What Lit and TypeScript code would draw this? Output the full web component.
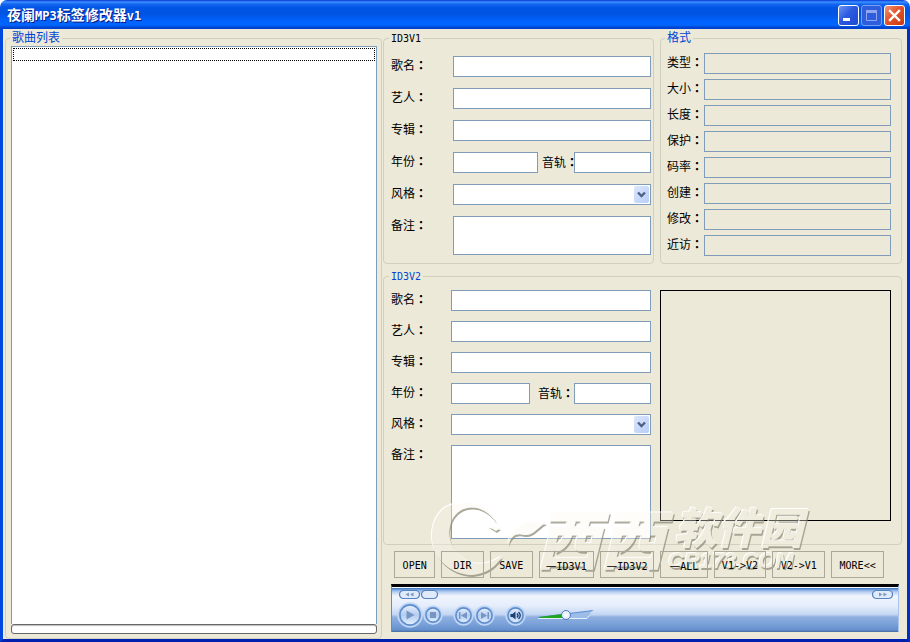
import { LitElement, html, svg, css } from "lit";
import { customElement, property } from "lit/decorators.js";

const colon = html`<span class="colon">：</span>`;

const baseText = css`
  :host {
    font-family: "DejaVu Sans Mono", "Noto Sans CJK SC", monospace;
    font-size: 12px;
    color: #000;
  }
  * {
    box-sizing: border-box;
  }
  .colon {
    font-family: "Noto Sans CJK JP", sans-serif;
    font-weight: 700;
  }
  .latin {
    font-size: 10px;
  }
`;

@customElement("title-bar")
class TitleBar extends LitElement {
  static styles = [
    baseText,
    css`
      :host {
        display: block;
      }
      .bar {
        display: flex;
        align-items: center;
        height: 29px;
        padding: 2px 5px 0 7px;
        border-radius: 7px 7px 0 0;
        background: linear-gradient(
          #0831d9 0,
          #3a93ff 2px,
          #1667f0 4px,
          #0055e5 8px,
          #0054e3 14px,
          #0061fa 20px,
          #0066ff 25px,
          #0049d6 27px,
          #003dcc 29px
        );
      }
      h1 {
        flex: 1;
        margin: 0;
        color: #fff;
        font-size: 14px;
        line-height: 24px;
        font-weight: 700;
        text-shadow: 1px 1px 0 #0a1883;
      }
      .narrow {
        font-size: 12px;
      }
      .controls {
        display: flex;
        gap: 2px;
      }
      button {
        width: 21px;
        height: 21px;
        padding: 0;
        border: 1px solid #fff;
        border-radius: 3px;
        background: linear-gradient(135deg, #6f93f5, #2a5ae0 45%, #1d4ad2);
      }
      button:disabled {
        border-color: #7d9cf3;
        background: #2f5edd;
      }
      .close {
        background: linear-gradient(135deg, #f0967c, #e2542c 45%, #c93a12);
      }
      svg {
        display: block;
      }
    `,
  ];

  render() {
    return html`
      <header class="bar">
        <h1>夜阑<span class="narrow">MP3</span>标签修改器<span class="narrow">v1</span></h1>
        <div class="controls">
          <button aria-label="最小化">
            <svg width="19" height="19"><rect x="4" y="12" width="7" height="3" fill="#fff" /></svg>
          </button>
          <button aria-label="最大化" disabled>
            <svg width="19" height="19">
              <path d="M4.500 5.500h10v9h-10z" fill="none" stroke="#8fa6f2" />
              <path d="M4 5.500h11" stroke="#8fa6f2" stroke-width="3" />
            </svg>
          </button>
          <button class="close" aria-label="关闭">
            <svg width="19" height="19">
              <path d="M5 5l9 9M14 5l-9 9" stroke="#fff" stroke-width="2.400" stroke-linecap="square" />
            </svg>
          </button>
        </div>
      </header>
    `;
  }
}

const fields = css`
  label {
    line-height: 18px;
    white-space: nowrap;
  }
  input,
  select,
  textarea {
    display: block;
    width: 100%;
    min-width: 0;
    height: 21px;
    margin: 0;
    padding: 1px 3px;
    border: 1px solid #7f9db9;
    border-radius: 0;
    background: #fff;
    font: inherit;
    outline: none;
    resize: none;
  }
`;

@customElement("tag-form")
class TagForm extends LitElement {
  @property() variant = "v1";

  static styles = [
    baseText,
    fields,
    css`
      :host {
        display: block;
      }
      .grid {
        display: grid;
        grid-template-columns: 62px 85fr 36px 77fr;
        grid-template-rows: repeat(5, 21px) 39px;
        row-gap: 11px;
      }
      .v2 {
        grid-template-columns: 60px 79fr 44px 77fr;
        grid-template-rows: repeat(5, 21px) 94px;
        row-gap: 10px;
      }
      .wide {
        grid-column: 2 / -1;
      }
      .track {
        padding-left: 4px;
        line-height: 20px;
      }
      .v2 .track {
        padding-left: 8px;
      }
      textarea {
        height: 100%;
      }
      .combo {
        position: relative;
      }
      .combo select {
        appearance: none;
      }
      .arrow {
        position: absolute;
        top: 2px;
        right: 2px;
        width: 15px;
        height: 17px;
        border-radius: 2px;
        background: linear-gradient(135deg, #dbe7fd, #b9cdf6);
        pointer-events: none;
      }
    `,
  ];

  render() {
    return html`
      <div class="grid ${this.variant}">
        <label for="song">歌名${colon}</label><input id="song" class="wide" />
        <label for="artist">艺人${colon}</label><input id="artist" class="wide" />
        <label for="album">专辑${colon}</label><input id="album" class="wide" />
        <label for="year">年份${colon}</label><input id="year" />
        <label for="track" class="track">音轨${colon}</label><input id="track" />
        <label for="genre">风格${colon}</label>
        <div class="wide combo">
          <select id="genre"></select>
          <svg class="arrow" viewBox="0 0 15 17">
            <path d="M4 6.500l3.500 3.500L11 6.500" fill="none" stroke="#4d6185" stroke-width="2.400" />
          </svg>
        </div>
        <label for="note">备注${colon}</label><textarea id="note" class="wide"></textarea>
      </div>
    `;
  }
}

@customElement("format-info")
class FormatInfo extends LitElement {
  static styles = [
    baseText,
    fields,
    css`
      :host {
        display: block;
      }
      .grid {
        display: grid;
        grid-template-columns: 37px 1fr;
        grid-auto-rows: 21px;
        row-gap: 5px;
      }
      input {
        background: transparent;
      }
    `,
  ];

  render() {
    const names = ["类型", "大小", "长度", "保护", "码率", "创建", "修改", "近访"];
    return html`
      <div class="grid">
        ${names.map(
          (name, i) => html`<label for="info${i}">${name}${colon}</label><input id="info${i}" readonly />`
        )}
      </div>
    `;
  }
}

const disc = (size: number, glyph: unknown) => {
  const c = size / 2;
  return html`<svg width=${size} height=${size}>
    <circle cx=${c} cy=${c} r=${c - 1} fill="#8fb3e6" stroke="#c3d8f5" stroke-width="1.500" />
    <circle cx=${c} cy=${c} r=${c - 3} fill="url(#gloss)" stroke="#5d8bca" stroke-width="1.300" />
    ${glyph}
  </svg>`;
};

@customElement("media-player")
class MediaPlayer extends LitElement {
  static styles = [
    baseText,
    css`
      :host {
        display: block;
      }
      .player {
        height: 48px;
        border-top: 3px solid #000;
        background: linear-gradient(
          #f4f8ff 0,
          #f4f8ff 1px,
          #3c72b8 1px,
          #7fa9e4 3px,
          #b9d0f3 5px,
          #f1f5fd 9px,
          #e4edfb 19px,
          #c6d8f4 27px,
          #bcd0f1 28px,
          #8fb0e0 30px,
          #7aa1d9 37px,
          #6590cd 43px,
          #44699f 45px
        );
        border-left: 1px solid #5d8bcb;
        border-right: 1px solid #a9c3ea;
        padding: 2px 5px 0 5px;
      }
      .seek {
        display: flex;
        gap: 1px;
        padding-left: 2px;
        height: 11px;
      }
      .seek svg {
        display: block;
      }
      .forward {
        margin-left: auto;
      }
      .row {
        display: flex;
        align-items: center;
        height: 30px;
      }
      button {
        padding: 0;
        border: 0;
        background: none;
        flex: none;
      }
      .row svg {
        display: block;
      }
      .pair {
        display: flex;
        align-items: center;
        margin-right: 10px;
      }
      .volume {
        position: relative;
        margin-left: 12px;
        width: 56px;
        height: 14px;
      }
      .volume input {
        position: absolute;
        inset: 0;
        width: 56px;
        height: 14px;
        margin: 0;
        appearance: none;
        background: none;
      }
      .volume input::-webkit-slider-thumb {
        appearance: none;
        width: 10px;
        height: 10px;
        border: 1px solid #4f7fb8;
        border-radius: 5px;
        background: radial-gradient(#fff, #cfe2fa);
      }
      .defs {
        position: absolute;
        width: 0;
        height: 0;
      }
    `,
  ];

  render() {
    const pill = (w: number, arrows: unknown) => html`<svg width=${w} height="10">
      <rect x="0.500" y="0.500" width=${w - 1} height="8" rx="4" fill="#dfeafa" stroke="#5583c4" stroke-width="1.200" />
      ${arrows}
    </svg>`;
    return html`
      <svg class="defs">
        <linearGradient id="gloss" x2="0" y2="1">
          <stop offset="0" stop-color="#e8f1fd" />
          <stop offset="0.500" stop-color="#b4cdf0" />
          <stop offset="1" stop-color="#e3f0ff" />
        </linearGradient>
      </svg>
      <div class="player">
        <div class="seek">
          <button aria-label="快退">${pill(21, svg`<path d="M10 2.500v4L6.500 4.500zM14.500 2.500v4L11 4.500z" fill="#7f97bd" />`)}</button>
          <button aria-label="进度">${pill(17, "")}</button>
          <button class="forward" aria-label="快进">
            ${pill(21, svg`<path d="M7 2.500v4L10.500 4.500zM11.500 2.500v4L15 4.500z" fill="#7f97bd" />`)}
          </button>
        </div>
        <div class="row">
          <div class="pair">
            <button aria-label="播放">
              ${disc(26, svg`<path d="M9.500 8.500v9l8-4.500z" fill="#7896c4" />`)}
            </button>
            <button aria-label="停止">
              ${disc(20, svg`<rect x="7" y="7" width="6" height="6" fill="#7896c4" />`)}
            </button>
          </div>
          <div class="pair">
            <button aria-label="上一首">
              ${disc(21, svg`<path d="M6 7h1.500v7H6zM14 7v7l-6-3.500z" fill="#7896c4" />`)}
            </button>
            <button aria-label="下一首">
              ${disc(21, svg`<path d="M13.500 7H15v7h-1.500zM7 7v7l6-3.500z" fill="#7896c4" />`)}
            </button>
          </div>
          <button aria-label="静音">
            ${disc(
              21,
              svg`<path d="M5.500 9h2L10.500 6.500v8L7.500 12h-2z" fill="#1d3f74" />
                <path d="M12 8.500q2 2 0 4M13.500 7q3.500 3.500 0 7" fill="none" stroke="#1d3f74" stroke-width="1.300" />`
            )}
          </button>
          <div class="volume">
            <svg width="56" height="14">
              <path d="M0 9.500L55 2.500L49 10.500H0z" fill="#9dbce8" stroke="#5f8fd0" />
              <path d="M0 10.500H49L55 2.500" fill="none" stroke="#e6f0fd" />
              <path d="M1 9L25 6V10H1z" fill="#1fa51f" />
            </svg>
            <input type="range" min="0" max="100" value="50" aria-label="音量" />
          </div>
        </div>
      </div>
    `;
  }
}

@customElement("site-watermark")
class SiteWatermark extends LitElement {
  static styles = css`
    :host {
      display: block;
    }
    svg {
      display: block;
      overflow: visible;
    }
    .han {
      font: italic 900 43px "Noto Sans CJK SC", sans-serif;
    }
    .big {
      font-size: 64px;
    }
    .url {
      font: italic 700 22px "Liberation Sans", sans-serif;
    }
  `;

  render() {
    return html`
      <svg width="400" height="84">
        <filter id="emboss" x="-5%" y="-5%" width="110%" height="110%" color-interpolation-filters="sRGB">
          <feOffset in="SourceAlpha" dx="1" dy="2" result="low" />
          <feGaussianBlur in="low" stdDeviation="0.600" result="lowSoft" />
          <feFlood flood-color="#8f8b7a" flood-opacity="0.750" />
          <feComposite in2="lowSoft" operator="in" />
          <feComposite in2="SourceAlpha" operator="out" result="dark" />
          <feOffset in="SourceAlpha" dx="-1" dy="-1" result="high" />
          <feFlood flood-color="#ffffff" flood-opacity="0.950" />
          <feComposite in2="high" operator="in" />
          <feComposite in2="SourceAlpha" operator="out" result="light" />
          <feFlood flood-color="#f8f6ea" flood-opacity="0.350" />
          <feComposite in2="SourceAlpha" operator="in" result="body" />
          <feMerge>
            <feMergeNode in="dark" />
            <feMergeNode in="light" />
            <feMergeNode in="body" />
          </feMerge>
        </filter>
        <g filter="url(#emboss)">
          <path
            d="M66 24C60 9 46 2 32 6C12 4 1 22 2 41C4 60 19 76 42 77C56 76 67 68 72 58C58 68 42 68 32 59C20 50 16 36 22 22C30 6 52 4 66 24z"
          />
          <path d="M58 28L70 30L66 33zM78 47C80 30 95 20 116 25C106 30 104 38 94 37C86 35 82 37 78 47z" />
          <text class="han big" x="106" y="66">西西</text>
          <text class="han" x="244" y="46">软件园</text>
          <text class="url" x="238" y="70">CR173.COM</text>
        </g>
      </svg>
    `;
  }
}

@customElement("app-root")
class AppRoot extends LitElement {
  static styles = [
    baseText,
    css`
      :host {
        display: block;
        background: #fff;
      }
      .window {
        display: flex;
        flex-direction: column;
        min-height: 100vh;
      }
      .body {
        flex: 1;
        display: grid;
        grid-template-columns: 377fr 519fr;
        gap: 1px;
        padding: 1px 5px 0 2px;
        background: #ece9d8;
        border: 3px solid #0046e0;
        border-top: 0;
        border-right-color: #0030c4;
        border-bottom-color: #0021b0;
      }
      fieldset {
        min-width: 0;
        margin: 0;
        border: 1px solid #d0d0bf;
        border-radius: 4px;
      }
      legend {
        margin-left: -2px;
        padding: 0 2px;
        line-height: 16px;
        color: #0046d5;
      }
      .plain {
        color: #000;
      }
      .songs {
        display: flex;
        flex-direction: column;
        padding: 0 4px 4px 5px;
      }
      .songs legend {
        margin-left: -1px;
      }
      .list {
        flex: 1;
        margin: 0;
        padding: 1px;
        list-style: none;
        background: #fff;
        border: 1px solid #7f9db9;
        border-bottom: 0;
      }
      .list li {
        height: 13px;
        border: 1px dotted #000;
      }
      progress {
        display: block;
        width: 100%;
        height: 10px;
        appearance: none;
        border: 1px solid #686868;
        border-radius: 3px;
        background: #fff;
        box-shadow: inset 0 1px 1px #bebebe;
      }
      progress::-webkit-progress-bar {
        background: transparent;
      }
      .right {
        position: relative;
        min-width: 0;
      }
      .top {
        display: grid;
        grid-template-columns: 271fr 242fr;
        gap: 6px;
        margin-bottom: 4px;
      }
      .v1 {
        padding: 9px 2px 8px 7px;
      }
      .format {
        padding: 7px 10px 7px 6px;
      }
      .v2 {
        padding: 5px 10px 5px 7px;
      }
      .split {
        display: grid;
        grid-template-columns: 260fr 231fr;
        gap: 9px;
        align-items: start;
      }
      .cover {
        aspect-ratio: 1;
        border: 1px solid #000;
      }
      .actions {
        position: relative;
        z-index: 1;
        display: flex;
        gap: 6px;
        margin: 6px 18px 6px 11px;
      }
      .actions button {
        min-width: 0;
        height: 27px;
        padding: 0;
        border: 1px solid #aca899;
        background: transparent;
        font: inherit;
        color: #000;
        white-space: nowrap;
      }
      .dash {
        font-family: "Noto Sans CJK SC", sans-serif;
      }
      .player {
        margin: 0 3px 7px 8px;
      }
      .mark {
        position: absolute;
        top: 468px;
        left: 47px;
        pointer-events: none;
      }
    `,
  ];

  render() {
    const actions: [string, number, boolean][] = [
      ["OPEN", 41, false],
      ["DIR", 42, false],
      ["SAVE", 43, false],
      ["ID3V1", 55, true],
      ["ID3V2", 55, true],
      ["ALL", 47, true],
      ["V1->V2", 53, false],
      ["V2->V1", 53, false],
      ["MORE<<", 53, false],
    ];
    return html`
      <div class="window">
        <title-bar></title-bar>
        <main class="body">
          <fieldset class="songs">
            <legend>歌曲列表</legend>
            <ul class="list" role="listbox" aria-label="歌曲列表">
              <li role="option"></li>
            </ul>
            <progress value="0" max="100" aria-label="进度"></progress>
          </fieldset>
          <div class="right">
            <div class="top">
              <fieldset class="v1">
                <legend class="plain"><span class="latin">ID3V1</span></legend>
                <tag-form variant="v1"></tag-form>
              </fieldset>
              <fieldset class="format">
                <legend>格式</legend>
                <format-info></format-info>
              </fieldset>
            </div>
            <fieldset class="v2">
              <legend><span class="latin">ID3V2</span></legend>
              <div class="split">
                <tag-form variant="v2"></tag-form>
                <div class="cover"></div>
              </div>
            </fieldset>
            <div class="actions">
              ${actions.map(
                ([text, grow, dash]) => html`<button style="flex: ${grow} 1 0">
                  ${dash ? html`<span class="dash">—</span>` : ""}<span class="latin">${text}</span>
                </button>`
              )}
            </div>
            <media-player class="player"></media-player>
            <site-watermark class="mark"></site-watermark>
          </div>
        </main>
      </div>
    `;
  }
}
